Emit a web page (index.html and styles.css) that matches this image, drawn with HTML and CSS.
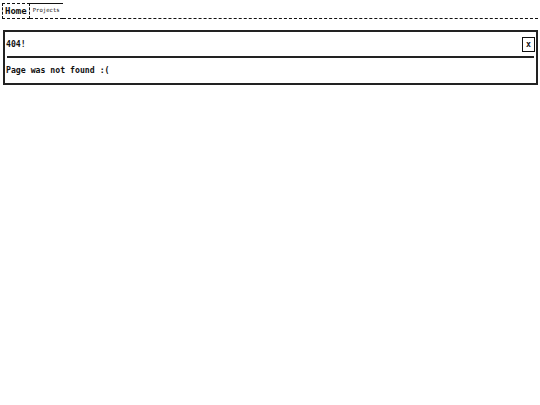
FILE: index.html
```html
<!DOCTYPE html>
<html>
<head>
<meta charset="utf-8">
<link rel="stylesheet" href="styles.css">
</head>
<body>
<nav class="tabs">
  <a class="tab tab-active">Home</a>
  <a class="tab tab-link">Projects</a>
  <span class="tab-fill"></span>
</nav>
<section class="panel">
  <div class="panel-head">
    <span class="panel-title">404!</span>
    <button class="close">x</button>
  </div>
  <div class="panel-sep"></div>
  <div class="panel-body">Page was not found :(</div>
</section>
</body>
</html>
```
FILE: styles.css
```css
html, body {
  margin: 0;
  padding: 0;
  background: #fff;
  color: #111;
  font-family: "DejaVu Sans Mono", monospace;
}
.tabs {
  display: flex;
  align-items: flex-end;
  padding: 3px 2px 0 2px;
}
.tab {
  display: block;
  box-sizing: border-box;
  height: 16px;
}
.tab-active {
  border: 1px dashed #111;
  padding: 1px 2px 0 2px;
  font-size: 9px;
  font-weight: bold;
  line-height: 13px;
}
.tab-link {
  border-top: 1px solid #111;
  border-bottom: 1px dashed #111;
  width: 33px;
  padding: 0 3px;
  font-size: 5.6px;
  line-height: 13px;
}
.tab-fill {
  flex: 1;
  border-bottom: 1px dashed #111;
}
.panel {
  margin: 11px 2px 0 3px;
  border: 2px solid #222;
  height: 55px;
  box-sizing: border-box;
}
.panel-head {
  display: flex;
  align-items: center;
  justify-content: space-between;
  height: 24px;
  padding: 0 1px 0 1px;
}
.panel-title {
  font-size: 8.2px;
  font-weight: bold;
}
.close {
  font-family: "DejaVu Sans Mono", monospace;
  font-size: 8.2px;
  font-weight: bold;
  border: 1px solid #111;
  background: #fff;
  width: 13px;
  height: 15px;
  padding: 0;
  margin: 0;
  color: #111;
  border-radius: 0;
  line-height: 13px;
}
.panel-sep {
  height: 2px;
  background: #222;
  margin: 0 2px;
}
.panel-body {
  padding: 4px 1px 0 1px;
  font-size: 8.2px;
  font-weight: bold;
  line-height: 16px;
}
```
